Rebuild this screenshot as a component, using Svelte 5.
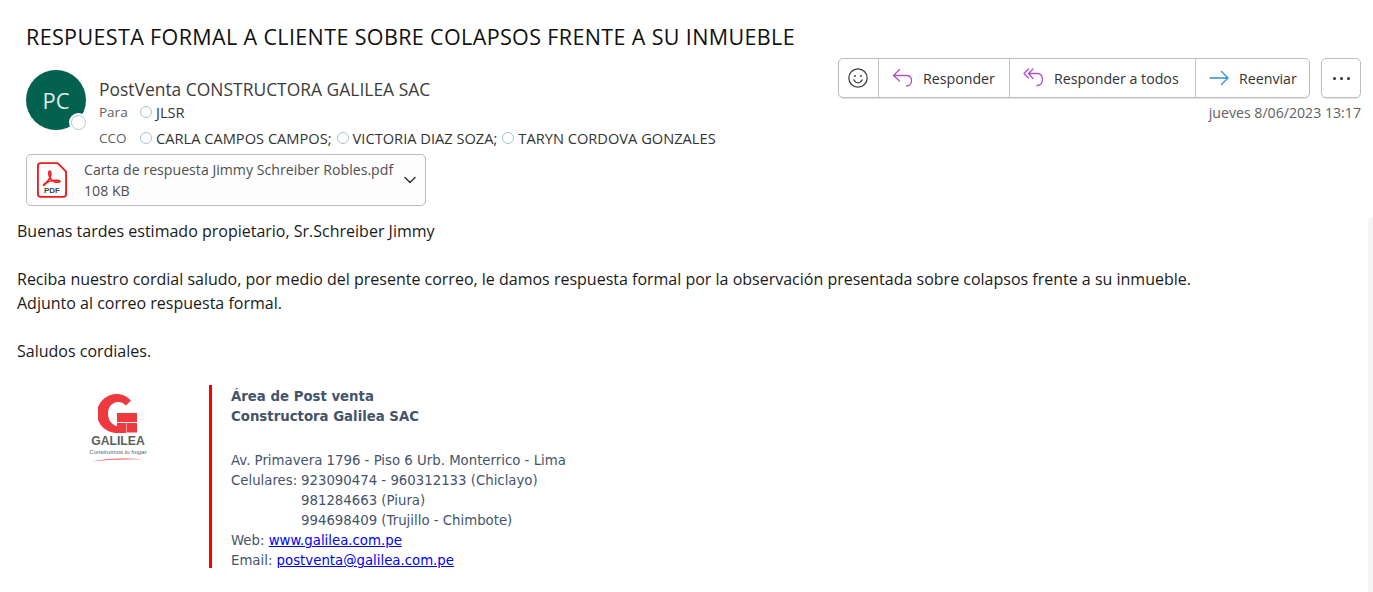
<script>
  const recipients = ['CARLA CAMPOS CAMPOS;', 'VICTORIA DIAZ SOZA;', 'TARYN CORDOVA GONZALES'];
</script>

<div class="page">
  <h1>RESPUESTA FORMAL A CLIENTE SOBRE COLAPSOS FRENTE A SU INMUEBLE</h1>

  <header class="head">
    <div class="avatar">PC<span class="presence"></span></div>
    <div class="meta">
      <div class="sender">PostVenta CONSTRUCTORA GALILEA SAC</div>
      <div class="line to"><span class="label">Para</span><span class="who"><i class="dot"></i>JLSR</span></div>
      <div class="line cco">
        <span class="label">CCO</span>
        {#each recipients as r}<span class="who"><i class="dot"></i>{r}</span>{/each}
      </div>
    </div>
    <div class="side">
      <div class="actions">
        <div class="group">
          <button class="emoji" aria-label="Reaccionar">
            <svg width="20" height="20" viewBox="0 0 20 20" fill="none" stroke="#3a3a3a" stroke-width="1.2">
              <circle cx="10" cy="10" r="9.2" />
              <circle cx="7" cy="8" r="0.9" fill="#3a3a3a" stroke="none" />
              <circle cx="13" cy="8" r="0.9" fill="#3a3a3a" stroke="none" />
              <path d="M5.8 11.8c1 2 2.500 3 4.200 3s3.200-1 4.200-3" stroke-linecap="round" />
            </svg>
          </button>
          <button class="reply">
            <svg width="21" height="20" viewBox="0 0 21 20" fill="none" stroke="#b14fc5" stroke-width="1.3" stroke-linecap="round" stroke-linejoin="round">
              <path d="M7.500 1.500L1.500 7.500l6 5.500M1.500 7.500H14c3.500 0 5.500 2.200 5.500 5s-1.800 5.500-5 5.500" />
            </svg>
            Responder
          </button>
          <button class="reply-all">
            <svg width="21" height="20" viewBox="0 0 21 20" fill="none" stroke="#b14fc5" stroke-width="1.3" stroke-linecap="round" stroke-linejoin="round">
              <path d="M5.500 1L1 5.500 5.500 10M10 1L5.500 5.500 10 10.500M5.500 5.500H14c3.500 0 5.500 2.500 5.500 6s-2 6-5.500 6" />
            </svg>
            Responder a todos
          </button>
          <button class="forward">
            <svg width="20" height="16" viewBox="0 0 20 16" fill="none" stroke="#2f8fd0" stroke-width="1.3" stroke-linecap="round" stroke-linejoin="round">
              <path d="M1 8h18M12.500 1.500L19 8l-6.500 6.500" />
            </svg>
            Reenviar
          </button>
        </div>
        <button class="more" aria-label="Más"><span></span><span></span><span></span></button>
      </div>
      <div class="date">jueves 8/06/2023 13:17</div>
    </div>
  </header>

  <div class="attachment">
    <svg class="pdf" width="30" height="38" viewBox="0 0 32 38" fill="none">
      <path d="M4 1h18l9 9v24a3 3 0 0 1-3 3H4a3 3 0 0 1-3-3V4a3 3 0 0 1 3-3z" fill="#fff" stroke="#f01c1c" stroke-width="2" stroke-linejoin="round" />
      <path d="M7 24c3-2 6.500-6 7.500-9.500.5-2 0-5-1-5s-1.300 2.500-.5 5c1 3 3 5.500 5.500 6.500 2 .7 6 .7 6-.5s-4.500-1.500-7.500-1c-3.500.6-7 2-8.500 4-.8 1.200-1.500 1.500-1.500.500z" stroke="#f01c1c" stroke-width="1.700" stroke-linejoin="round" />
      <text x="16" y="33" text-anchor="middle" class="pdf-label">PDF</text>
    </svg>
    <div class="file">
      <div class="name">Carta de respuesta Jimmy Schreiber Robles.pdf</div>
      <div class="size">108 KB</div>
    </div>
    <svg class="chev" width="12" height="8" viewBox="0 0 12 8" fill="none" stroke="#333" stroke-width="1.500" stroke-linecap="round" stroke-linejoin="round">
      <path d="M1 1.500l5 5 5-5" />
    </svg>
  </div>

  <main class="body">
    <p>Buenas tardes estimado propietario, Sr.Schreiber Jimmy</p>
    <p class="gap">Reciba nuestro cordial saludo, por medio del presente correo, le damos respuesta formal por la observación presentada sobre colapsos frente a su inmueble.</p>
    <p>Adjunto al correo respuesta formal.</p>
    <p class="gap">Saludos cordiales.</p>

    <section class="signature">
      <div class="logo">
        <svg width="40" height="39" viewBox="0 0 40 39" fill="#ee3a3f">
          <path d="M33 6.500A19.500 19.500 0 1 0 19.500 39H28V29H19V32C13.500 31 10 26 10 19.500C10 13 14 8 20 8C23 8 25.500 9 28 11.500Z" />
          <path d="M19 19H39V28H19zM28.500 29H39V38.500H28.500z" />
        </svg>
        <div class="brand">GALILEA</div>
        <div class="tag">Construimos tu hogar</div>
        <svg class="swoosh" width="52" height="5" viewBox="0 0 52 5"><path d="M0 4.500C14 1.500 34 .5 52 2.500 34 1.800 16 2.500 0 4.500z" fill="#ee3a3f" /></svg>
      </div>
      <div class="card">
        <strong>Área de Post venta<br />Constructora Galilea SAC</strong>
        <div>Av. Primavera 1796 - Piso 6 Urb. Monterrico - Lima</div>
        <div class="row"><span class="key">Celulares:</span><span>923090474 - 960312133 (Chiclayo)<br />981284663 (Piura)<br />994698409 (Trujillo - Chimbote)</span></div>
        <div>Web: <a href="#top">www.galilea.com.pe</a></div>
        <div>Email: <a href="#top">postventa@galilea.com.pe</a></div>
      </div>
    </section>
    <div class="scrollbar"></div>
  </main>
</div>

<style>
  :global(body) {
    background: #fff;
  }

  .page {
    height: 592px;
    overflow: hidden;
    font-family: "Open Sans", "Noto Sans", sans-serif;
    color: #242424;
    display: flex;
    flex-direction: column;
  }

  h1 {
    margin: 0;
    padding: 23px 0 0 26px;
    font-size: 21.5px;
    line-height: 28px;
    letter-spacing: 0.37px;
    font-weight: 400;
    color: #111;
  }

  .head {
    display: flex;
    padding: 7px 12px 0 26px;
    height: 103px;
    box-sizing: border-box;
  }

  .avatar {
    width: 60px;
    height: 60px;
    margin-top: 12px;
    border-radius: 50%;
    background: #03614f;
    color: #d8ecea;
    font-size: 22px;
    display: grid;
    place-items: center;
    position: relative;
    flex: none;
  }

  .presence {
    position: absolute;
    right: 0;
    bottom: 0;
    width: 15px;
    height: 15px;
    border-radius: 50%;
    background: #fff;
    border: 1.500px solid #aec7d4;
    box-shadow: 0 0 0 2px #fff;
    box-sizing: border-box;
  }

  .meta {
    margin-left: 13px;
    padding-top: 19px;
    flex: 1;
  }

  .sender {
    font-size: 17.450px;
    line-height: 24px;
    color: #3c3c3c;
  }

  .line {
    display: flex;
    align-items: center;
    font-size: 14.650px;
    line-height: 26px;
    color: #333;
  }

  .to {
    margin-top: -2px;
  }

  .label {
    width: 41px;
    font-size: 13.500px;
    color: #616161;
    flex: none;
  }

  .who {
    display: inline-flex;
    align-items: center;
  }

  .who + .who {
    margin-left: 5px;
  }

  .dot {
    width: 12px;
    height: 12px;
    border: 1px solid #a9c4d3;
    border-radius: 50%;
    box-sizing: border-box;
    margin-right: 4px;
  }

  .side {
    display: flex;
    flex-direction: column;
    align-items: flex-end;
  }

  .actions {
    display: flex;
    gap: 11px;
  }

  .group {
    display: flex;
    height: 40px;
    border: 1px solid #bdbdbd;
    border-radius: 5px;
    box-sizing: border-box;
    box-shadow: 0 1px 1px #e4e4e4;
  }

  button {
    display: flex;
    align-items: center;
    gap: 10px;
    height: 100%;
    padding: 0 0 0 13px;
    box-sizing: border-box;
    background: none;
    border: 0;
    border-left: 1px solid #c4c4c4;
    font: inherit;
    font-size: 14.200px;
    color: #333;
  }

  .group button:first-child {
    border-left: 0;
  }

  .emoji {
    width: 39px;
    padding: 0 0 0 9px;
  }

  .reply {
    width: 131px;
  }

  .reply-all {
    width: 186px;
  }

  .forward {
    width: 114px;
  }

  .more {
    width: 40px;
    height: 40px;
    padding: 0;
    justify-content: center;
    gap: 4px;
    border: 1px solid #bdbdbd;
    border-radius: 5px;
    box-shadow: 0 1px 1px #e4e4e4;
  }

  .more span {
    width: 3px;
    height: 3px;
    border-radius: 50%;
    background: #333;
  }

  .date {
    margin-top: 5px;
    font-size: 14.150px;
    line-height: 20px;
    color: #616161;
  }

  .attachment {
    width: 400px;
    height: 52px;
    margin-left: 26px;
    box-sizing: border-box;
    display: flex;
    align-items: center;
    border: 1px solid #bdbdbd;
    border-radius: 5px;
    background: #fdfdfd;
    padding: 0 9px 0 10px;
    flex: none;
  }

  .pdf {
    flex: none;
  }

  .pdf-label {
    font-family: "Liberation Sans", sans-serif;
    font-size: 8.500px;
    font-weight: 700;
    fill: #444;
  }

  .file {
    margin-left: 17px;
    flex: 1;
    font-size: 14.150px;
    line-height: 20px;
    color: #505050;
  }

  .size {
    margin-top: 1px;
  }

  .chev {
    flex: none;
  }

  .body {
    flex: 1;
    padding: 13px 0 0 17px;
    position: relative;
    font-size: 16px;
    line-height: 24px;
    color: #1a1a1a;
  }

  p {
    margin: 0;
  }

  .gap {
    margin-top: 24px;
  }

  .scrollbar {
    position: absolute;
    top: 11px;
    right: 0;
    bottom: 0;
    width: 5px;
    background: #f5f5f5;
    border-top-left-radius: 5px;
  }

  .signature {
    display: flex;
    margin-top: 22px;
  }

  .logo {
    width: 192px;
    padding: 9px 0 0 10px;
    box-sizing: border-box;
    display: flex;
    flex-direction: column;
    align-items: center;
    flex: none;
  }

  .brand {
    font-family: "Liberation Sans", sans-serif;
    font-weight: 700;
    font-size: 12.200px;
    line-height: 13px;
    color: #59615f;
    margin-top: 2px;
  }

  .tag {
    font-family: "Liberation Sans", sans-serif;
    font-style: italic;
    font-size: 6px;
    line-height: 8px;
    color: #59615f;
  }

  .swoosh {
    display: block;
    margin-top: 1px;
  }

  .card {
    border-left: 3px solid #f00;
    padding: 2px 0 0 19px;
    font-family: "DejaVu Sans", sans-serif;
    font-size: 13.300px;
    line-height: 20px;
    color: #44546a;
    height: 183px;
    box-sizing: border-box;
  }

  .card strong {
    display: block;
    margin-bottom: 24px;
  }

  .row {
    display: flex;
    gap: 4px;
  }

  .key {
    width: 66px;
    flex: none;
  }

  a {
    color: #00f;
  }
</style>
